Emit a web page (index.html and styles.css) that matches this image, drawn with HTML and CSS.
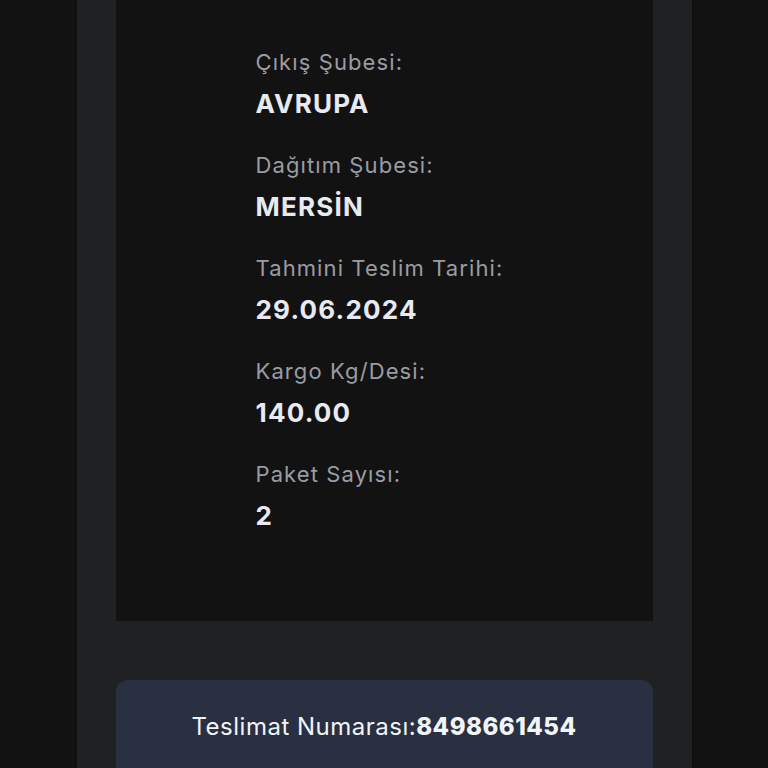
FILE: index.html
```html
<!DOCTYPE html>
<html lang="tr">
<head>
  <meta charset="UTF-8" />
  <meta name="viewport" content="width=device-width, initial-scale=1.0">
  <title>Kargo Detay</title>
  <link rel="stylesheet" href="styles.css">
</head>
<body>
  <div class="page">
    <div class="detay-panel">
      <div class="detay-satir">
        <div class="etiket">Çıkış Şubesi:</div>
        <div class="deger">AVRUPA</div>
      </div>
      <div class="detay-satir">
        <div class="etiket">Dağıtım Şubesi:</div>
        <div class="deger">MERSİN</div>
      </div>
      <div class="detay-satir">
        <div class="etiket">Tahmini Teslim Tarihi:</div>
        <div class="deger">29.06.2024</div>
      </div>
      <div class="detay-satir">
        <div class="etiket">Kargo Kg/Desi:</div>
        <div class="deger">140.00</div>
      </div>
      <div class="detay-satir">
        <div class="etiket">Paket Sayısı:</div>
        <div class="deger">2</div>
      </div>
    </div>
    <div class="teslimat-kart">
      Teslimat Numarası:<b>8498661454</b>
    </div>
  </div>
</body>
</html>
```

FILE: styles.css
```css
body {
  margin: 0;
  background-color: #121212;
  font-family: Inter, "Noto Sans", sans-serif;
}
.page {
  width: 537px;
  min-height: 768px;
  margin: 0 auto;
  padding: 0 39px;
  background-color: #202123;
  box-shadow: 0 0 2px rgba(0, 0, 0, 0.6);
}
.detay-panel {
  background-color: #121212;
  padding: 42px 0 64px 140px;
}
.detay-satir { margin-bottom: 21px; }
.etiket {
  color: #9a9ca3;
  font-size: 22px;
  letter-spacing: 1.1px;
  line-height: 41px;
}
.deger {
  color: #e8eaf2;
  font-size: 26px;
  font-weight: 700;
  letter-spacing: 1.2px;
  line-height: 41px;
}
.teslimat-kart {
  margin-top: 59px;
  background-color: #283042;
  border-radius: 12px;
  color: #f3f4f6;
  font-size: 24px;
  letter-spacing: 0.5px;
  line-height: 34px;
  text-align: center;
  padding: 30px 0 40px;
}
.teslimat-kart b { font-weight: 800; }
```
